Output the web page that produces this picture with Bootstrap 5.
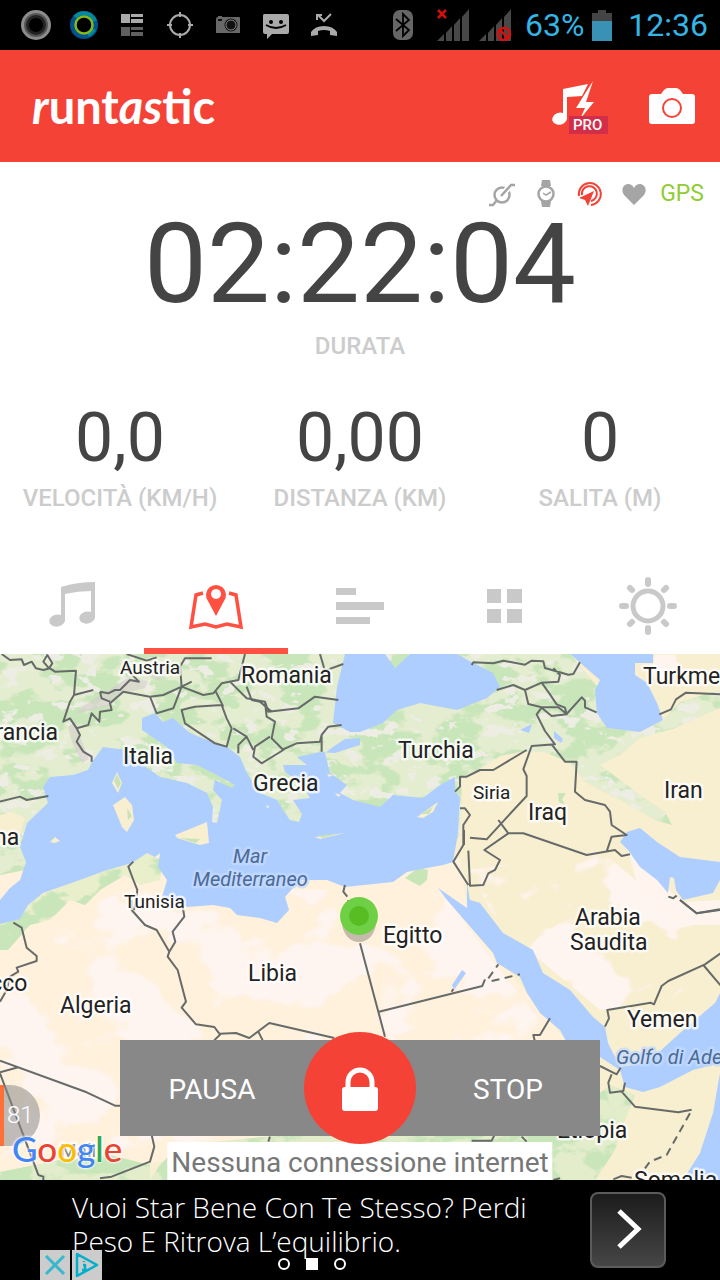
<!DOCTYPE html>
<html lang="it">
<head>
<meta charset="utf-8">
<meta name="viewport" content="width=device-width, initial-scale=1">
<title>Runtastic</title>
<link href="https://cdn.jsdelivr.net/npm/bootstrap@5.3.0/dist/css/bootstrap.min.css" rel="stylesheet">
<style>
body{font-family:Roboto,"Liberation Sans",sans-serif;background:#fff;color:#444}
svg{display:block;flex:none}
button,.btn{--bs-btn-border-radius:0}
.statusbar{height:50px;background:#000;color:#33b5e5;font-size:32px;line-height:50px}
.apphead{height:112px;background:#f44336}
.brandname{font:700 47px/48px Lato,sans-serif;color:#fff;text-decoration:none}
.sensors{height:30px}
.gps{font-size:23px;line-height:32px;color:#92cc33;width:48px;text-align:right}
.clock{font-size:112px;line-height:112px}
.metrics{margin-top:44px}
.metric{font-size:68px;line-height:68px}
.caption{font-size:24px;line-height:28px;font-weight:500;color:#ccc}
.metrics .caption{margin-top:12px}
.tabs .btn{height:94px;color:#c9c9c9;border:0;border-bottom:6px solid transparent;padding:4px 0 0}
.tabs .btn.active{color:#ff5041;border-color:#ff5041;background:none}
.mapbox{min-height:526px;overflow:hidden;background:#aeceff}
filter{color-interpolation-filters:sRGB}
.lbl{font-size:23px;fill:#222;stroke:#fff;stroke-opacity:.75;stroke-width:5px;paint-order:stroke;stroke-linejoin:round}
.sm{font-size:19px}
.faint{fill:#888}
.sea-lbl{font-size:20px;font-style:italic;fill:#4c6a94;stroke:#c4dbff}
.controls{width:66.667%;left:16.667%;bottom:44px;height:96px}
.controls .act{background:#888;color:#fff;font-size:28px;border:0;padding-top:10px}
.controls .pause{padding-right:68px}
.controls .stop{padding-left:68px}
.lock{width:112px;height:112px;background:#f44336;left:50%;top:50%;transform:translate(-50%,-50%);border:0}
.notice{font-size:28px;line-height:34px;color:#777;background:#fff;white-space:nowrap;padding:4px 4px 0}
.speed{left:0;bottom:34px;width:40px;height:61px;background:#8888;border-left:4px solid #ff7038;border-radius:0 31px 31px 0;color:#fff;font-size:24px;line-height:61px;font-weight:300;padding-left:3px}
.google{left:12px;bottom:12px;font:500 35px/40px Lato,sans-serif;text-shadow:0 0 3px #fff,0 0 3px #fff}
.ad{height:100px;background:#000;color:#fff;font:300 28px/34px "Open Sans",sans-serif;padding:10px 54px 0 72px}
.go{width:76px;height:76px;margin-top:2px;border:2px solid #5b5b5b;border-radius:8px;background:linear-gradient(#1c1c1c,#464646)}
.adtools{left:40px;bottom:0;gap:2px}
.adtools button{width:30px;height:30px;background:#ccc;border:0;padding:0}
.pager{bottom:10px;left:278px;gap:16px}
.pager input{appearance:none;width:12px;height:12px;border:2px solid #fff;border-radius:50%;margin:0;background:#000}
.pager input:checked{background:#fff;border-radius:0}
</style>
</head>
<body class="d-flex flex-column min-vh-100">
<div class="statusbar d-flex align-items-center ps-2 pe-2">
  <div class="d-flex ps-1">
    <svg width="48" height="50" viewBox="0 0 48 50"><circle cx="24" cy="25" r="15" fill="#8c8c8c"/><circle cx="24" cy="25" r="12" fill="#555"/><circle cx="24" cy="25" r="10" fill="#222"/><circle cx="24" cy="25" r="7"/></svg>
    <svg width="48" height="50" viewBox="0 0 48 50"><circle cx="24" cy="25" r="11.5" fill="none" stroke="#00538c" stroke-width="5"/><path d="M15 17a12 12 0 0 1 20 4M28 35a11 11 0 0 0 6-6" fill="none" stroke="#008a9c" stroke-width="4"/><circle cx="24" cy="25" r="8.5" fill="none" stroke="#86b71d" stroke-width="2.5"/></svg>
    <svg width="48" height="50" viewBox="0 0 48 50"><path d="M13 14h9v9h-9zM23 14h12v3H23zM23 19h12v4H23z" fill="#aaa"/><path d="M13 27h9v9h-9zM23 27h12v3H23zM23 32h12v4H23z" fill="#606060"/></svg>
    <svg width="48" height="50" viewBox="0 0 48 50"><g fill="none" stroke="#aaa" stroke-width="2"><circle cx="24" cy="25" r="10"/><path d="M24 12v5M24 33v5M11 25h5M32 25h5"/></g></svg>
    <svg width="48" height="50" viewBox="0 0 48 50"><path d="M12 19q0-2 2-2v-1h4v1h17q1 0 1 1v15H12z" fill="#686868"/><path d="M14 20h4" stroke="#111" stroke-width="2"/><circle cx="27" cy="25" r="6.5" fill="#111"/><circle cx="27" cy="25" r="5" fill="#111" stroke="#888"/></svg>
    <svg width="48" height="50" viewBox="0 0 48 50"><path d="M12 14h23q2 0 2 2v16q0 2-2 2H20l-5 5v-5h-2q-2 0-2-2V16q0-2 1-2z" fill="#aaa"/><circle cx="19" cy="22" r="2"/><circle cx="29" cy="22" r="2"/><path d="M14 25q10 6 20 0" fill="none" stroke="#000" stroke-width="2"/></svg>
    <svg width="48" height="50" viewBox="0 0 48 50" fill="none" stroke="#aaa"><path d="M31 14l-7 7-6-6M17 20v-5h5" stroke-width="2"/><path d="M11 36v-4q4-6 13-6t13 6v4l-7-1v-4q-6-2-12 0v4z" fill="#aaa" stroke="none"/></svg>
  </div>
  <div class="d-flex align-items-center ms-auto pe-1">
    <svg width="20" height="30" viewBox="0 0 20 30"><rect width="20" height="30" rx="7" fill="#666"/><path d="M3 9l13 11-6 6V4l6 6L3 21" fill="none" stroke="#000" stroke-width="1.8"/></svg>
    <svg class="ms-4" width="34" height="34" viewBox="0 0 34 34"><path d="M0 33l7-7v7zM9 25l6-7v15H9zM17 17l6-7v23h-6zM25 9l7-8v32h-7z" fill="#484848"/><path d="M1 2l8 8M9 2l-8 8" stroke="#d80f0f" stroke-width="2.5"/></svg>
    <svg class="ms-2" width="34" height="34" viewBox="0 0 34 34"><path d="M0 33l7-7v7zM9 25l6-7v15H9zM17 17l6-7v23h-6zM25 9l7-8v32h-7z" fill="#484848"/><circle cx="25" cy="26" r="6" fill="none" stroke="#d80f0f" stroke-width="2.5"/><path d="M21 22l8 8" stroke="#d80f0f" stroke-width="2.5"/></svg>
    <span class="ps-1 ms-2">63%</span>
    <svg class="ms-2" width="20" height="32" viewBox="0 0 20 32"><path d="M0 4h6V1h8v3h6v8H0z" fill="#444"/><path d="M0 12h20v20H0z" fill="#3a91b6"/></svg>
    <span class="ms-3">12:36</span>
  </div>
</div>

<header class="apphead d-flex align-items-center px-4">
  <a href="#" class="brandname ps-2" aria-label="runtastic"><i>r</i>unt<i>as</i>tic</a>
  <button class="btn p-0 border-0 ms-auto" aria-label="Musica PRO"><svg width="56" height="60" viewBox="0 -4 56 60"><path d="M11 9L36 4l-6 12-15 1v22a7.500 6 -15 1 1-4-6z" fill="#fff"/><path d="M41 1L24 28h9l-5 11 14-17h-8z" fill="#fff"/><rect x="17" y="36" width="39" height="18" fill="#d22d49"/><text x="21" y="50" font-size="15" font-weight="500" fill="#fff">PRO</text></svg></button>
  <button class="btn p-0 border-0 ms-4 ps-3" aria-label="Fotocamera"><svg width="48" height="38" viewBox="0 0 48 38"><path d="M4 7h9l3-4q2-2 4-2h8q2 0 4 2l3 4h9q3 0 3 3v24q0 3-3 3H4q-3 0-3-3V10q0-3 3-3z" fill="#fff"/><circle cx="24" cy="21" r="9" fill="none" stroke="#f44336" stroke-width="2"/></svg></button>
</header>

<main class="d-flex flex-column flex-grow-1">
<section class="text-center pt-3 pb-5">
  <div class="sensors d-flex justify-content-end pe-3">
    <svg width="44" height="30" viewBox="0 0 44 30" fill="none" stroke="#a5a5a5" stroke-width="2.5"><circle cx="22" cy="17" r="7.500"/><path d="M9 27h4l4-5"/><path d="M22 17L31 7h4" stroke="#fff" stroke-width="6"/><path d="M21 18L31 7h4"/></svg>
    <svg width="44" height="30" viewBox="0 0 44 30"><path d="M18 2h8l1 6H17zM17 23h10l-1 6h-8z" fill="#a5a5a5"/><circle cx="22" cy="16" r="7.500" fill="#fff" stroke="#a5a5a5" stroke-width="2.500"/><path d="M19 15l3 2 5-3" fill="none" stroke="#a5a5a5" stroke-width="1.500"/></svg>
    <svg width="44" height="30" viewBox="0 0 44 30"><g fill="none" stroke="#f44336" stroke-width="2"><path d="M11 18a11 11 0 1 1 12 9"/><path d="M14 17a7.500 7.500 0 1 1 9 6"/></g><path d="M26 13L11 20l6 2 3 6z" fill="#f44336"/></svg>
    <svg width="44" height="30" viewBox="0 0 44 30"><path d="M22 27l-10-10C8 11 12 6 16 6q4 0 6 4 2-4 6-4c4 0 8 5 4 11z" fill="#a5a5a5"/></svg>
    <span class="gps">GPS</span>
  </div>
  <div class="clock">02:22:04</div>
  <div class="caption mt-2 pt-1">DURATA</div>
  <div class="metrics row g-0">
    <div class="col-4"><div class="metric">0,0</div><div class="caption">VELOCITÀ (KM/H)</div></div>
    <div class="col-4"><div class="metric">0,00</div><div class="caption">DISTANZA (KM)</div></div>
    <div class="col-4"><div class="metric">0</div><div class="caption">SALITA (M)</div></div>
  </div>
</section>

<nav class="tabs d-flex">
  <button class="btn flex-fill w-100" aria-label="Musica"><svg class="mx-auto" width="60" height="60" viewBox="0 0 60 60" fill="currentColor"><path d="M19 11q16-5 34-5v36a8 6 -10 1 1-4-6V15q-13 0-26 3v27a8 6 -10 1 1-4-6z"/></svg></button>
  <button class="btn active flex-fill w-100" aria-label="Mappa"><svg class="mx-auto" width="60" height="60" viewBox="0 0 60 60"><path d="M17 17l-7 2-5 32 14-3 11 3 11-3 14 3-5-32-7-2" fill="none" stroke="currentColor" stroke-width="3.500"/><path fill-rule="evenodd" d="M30 40l-8-15a10 10 0 1 1 16 0zM30 13a5 5 0 1 0 .1 0z" fill="currentColor"/></svg></button>
  <button class="btn flex-fill w-100" aria-label="Statistiche"><svg class="mx-auto" width="48" height="60" viewBox="0 0 48 60" fill="currentColor"><path d="M0 12h20v7H0zM0 26h48v8H0zM0 41h34v7H0z"/></svg></button>
  <button class="btn flex-fill w-100" aria-label="Riquadri"><svg class="mx-auto" width="60" height="60" viewBox="0 0 60 60" fill="currentColor"><path d="M13 13h14v14H13zM33 13h15v14H33zM13 33h14v14H13zM33 33h15v14H33z"/></svg></button>
  <button class="btn flex-fill w-100" aria-label="Meteo"><svg class="mx-auto" width="60" height="60" viewBox="0 0 60 60" fill="none" stroke="currentColor" stroke-linecap="round"><circle cx="30" cy="30" r="15" stroke-width="5"/><path d="M30 4v4M30 52v4M4 30h4M52 30h4M12 12l2 2M46 46l2 2M48 12l-2 2M14 46l-2 2" stroke-width="6"/></svg></button>
</nav>

<section class="mapbox position-relative flex-grow-1">
<svg class="position-absolute top-0 start-0 w-100 h-100" viewBox="0 654 720 526" preserveAspectRatio="xMidYMid slice" role="img" aria-label="Mappa">
  <defs>
    <filter id="woods" x="0" y="0" width="100%" height="100%"><feTurbulence type="fractalNoise" baseFrequency=".025 .04" numOctaves="4" seed="8"/><feColorMatrix values="0 0 0 0 .79  0 0 0 0 .90  0 0 0 0 .73  14 0 0 0 -6.7"/><feComposite operator="in" in2="SourceAlpha"/></filter>
    <filter id="ridges" x="0" y="0" width="100%" height="100%"><feTurbulence type="fractalNoise" baseFrequency=".05 .08" numOctaves="4" seed="21"/><feColorMatrix values="0 0 0 0 .93  0 0 0 0 .93  0 0 0 0 .89  0 16 0 0 -9.600"/><feComposite operator="in" in2="SourceAlpha"/></filter>
    <filter id="sand" x="0" y="0" width="100%" height="100%"><feTurbulence type="fractalNoise" baseFrequency=".012 .016" numOctaves="4" seed="5"/><feColorMatrix values="0 0 0 0 1  0 0 0 0 .96  0 0 0 0 .94  16 0 0 0 -8"/><feComposite operator="in" in2="SourceAlpha"/></filter>
    <path id="north" d="M0 654H570L600 690 597 713 607 728 640 732 663 720 680 702 720 690V708L675 728 640 738 620 755 600 765 640 795 665 812 672 825 655 820 620 800 585 782 570 763 545 752 520 752 500 756 478 770 462 778 460 835 440 860 300 830 150 845 0 875z"/>
    <path id="maghreb" d="M0 915L28 900 60 887 107 870 147 853 162 860 160 880 140 885 125 875 100 890 85 905 70 900 50 920 30 925 8 950 0 950z"/>
    <path id="horn" d="M180 1145L360 1128 560 1125 610 1085 635 1095 625 1120 615 1150 595 1180H150L160 1165zM0 1172L70 1158 110 1155 150 1165 150 1180H0z"/>
  </defs>
  <path fill="#f8eed0" d="M0 654h720v526H0z"/>
  <path fill="#fff1dc" d="M0 850L345 860 460 858 467 908 500 960 540 1010 570 1045 600 1060 560 1125 350 1140 0 1180z"/>
  <path filter="url(#sand)" d="M0 935L130 890 300 890 440 890 500 970 560 1045 380 1125 0 1160z"/>
  <path filter="url(#sand)" d="M470 870L600 850 665 905 720 905V960L670 1000 600 1010 540 960 490 910z"/>
  <use href="#north" fill="#e4edcf"/><use href="#north" filter="url(#woods)"/><use href="#north" filter="url(#ridges)"/>
  <use href="#maghreb" fill="#e9eecb"/><use href="#maghreb" filter="url(#woods)"/>
  <use href="#horn" fill="#e3edcc"/><use href="#horn" filter="url(#woods)"/>
  <path fill="#f8eed0" d="M0 815L12 812 25 818 18 840 0 835zM502 757L530 752 560 765 575 795 605 815 620 835 560 845 465 825 468 785z"/>
  <path fill="#fff5ee" d="M628 850L660 882 683 902 720 900V925L680 925 640 895zM655 655h20l3 10-12 15-15-6z"/>
  <path fill="#c7e5b6" d="M405 878l13-10 10 2-1 10-7 6zM558 793h8l-4 6 3 6-6-3z"/>
  <g fill="#d4cfcb" opacity=".65"><path d="M68 727l8-6 5 18 8 20-7 4-9-18zM75 714l35-8 10-12 25-6 3-7-20-3-20 12-25 16zM145 675l15-10 8 4-8 12z"/></g>
  <g fill="#aeceff">
    <path d="M92 762L88 770 73 775 50 777 43 787 48 803 27 823 20 847 26 862 20 880 10 888 0 900V924L20 919 28 905 43 893 60 887 80 880 107 870 132 863 147 853 155 857 160 853 158 867 167 880 162 897 187 907 213 905 230 908 237 915 260 918 277 923 289 910 285 897 300 880 327 880 345 887 393 882 407 872 427 868 443 865 453 862 458 833 460 797 455 792 455 777 440 785 423 798 393 795 380 807 353 800 340 793 347 785 330 773 325 753 333 747 345 739 360 738 360 745 335 753 320 752 297 757 307 765 283 765 285 772 302 784 310 798 293 800 302 814 299 822 290 820 283 810 277 800 260 793 247 773 240 757 227 747 207 740 190 733 173 718 163 722 155 713 142 718 142 730 167 747 177 763 197 765 213 773 235 785 232 788 215 780 213 790 222 800 217 823 212 822 213 807 207 793 187 783 160 777 140 763 127 750 103 747z"/>
    <path d="M345 654L337 687 333 723 350 732 360 732 383 723 397 710 420 703 457 710 487 698 500 687 493 673 473 663 457 654 410 654 395 668 385 654z"/>
    <path d="M570 654L600 680 595 690 597 713 607 728 640 732 663 720 657 703 647 683 635 675 635 663 653 663 653 654z"/>
    <path d="M620 842L627 832 640 828 657 842 680 857 720 862V880L713 893 683 900 676 890 674 878 670 877 668 893 657 880 640 867 628 850z"/>
    <path d="M438 888L467 908 467 883 470 900 480 903 503 933 533 950 543 973 570 990 593 1017 605 1027 608 1043 620 1067 647 1063 680 1033 715 1003 720 993V1063L693 1070 660 1087 643 1092 625 1087 620 1070 600 1057 567 1043 560 1030 540 1013 527 993 520 977 497 963 493 953 467 923 447 900z"/>
    <path d="M720 1073L713 1113 700 1153 683 1180H720z"/>
    <path d="M520 730l12-6-3 9zM554 731l9 8-2 4-7-5zM452 985l10-15 4 3-12 17z"/>
  </g>
  <g fill="#f8eed0"><path d="M117 772l5 11-4 10-6-10zM125 797l7 8 2 15-7 12-5-5-9-22zM175 835l32-13 2 21-9 2-23-7zM50 842l5-5 5 4-5 2zM417 817l21-15-5 10-10 6zM315 837l30-4-25 6zM327 774l6 1-4 2zM335 793l6 2-3 2zM266 805l4 2-3 1z"/></g>
  <g fill="#c9e3b6"><path d="M117 774l4 9-3 6-4-8zM127 808l5 8-4 4zM180 838l20 1-4 4zM318 836l20-2-15 4zM421 814l12-7-4 7z"/></g>
  <g fill="none" stroke="#666b69" stroke-width="6" stroke-linejoin="round">
    <g transform="translate(0 650) scale(.3333)">
      <path d="M5 12L30 30 65 28 72 45 95 35 108 55 130 60 150 55 165 65 228 62 222 135 280 120M130 35l12-20 15 25-10 15zM222 135L210 155 190 215 210 205 230 235 265 225 275 190 298 215 300 185 335 180 330 160 370 125 450 140 490 135 545 110 610 135 640 130 665 100 715 90 735 12M300 125l25 5 20-10 15 0 30-30 27 5-30-30-5-20M300 125l5 20 25 10M450 140l20 50 50-15 25-65-5-60 15-25 80 0M380 12l60 20 30-10M545 110l30-15M645 120l25 50M740 110l15 40 25 5 35 30M690 95l50 50 55 10 10 30 90-10 50-35 70 10M585 170l80-5 15 40 15 30-15 55-35-10-90-60-10-40 20-5zM795 155l5 45 25 15-10 50 35 35-65 40-25-20 5-30 45-30M700 235l40 25 20 40M740 260l-25 25 0 25M845 300l45-20 70-5 5-20 20-25 40-5M965 255l0 50M960 12l15 50 55-20M0 455l60-15 20 10 65-12M230 235l10 20-10 20 20 30 25 15 0 15M400 635l-15 15 15 40 12 30-5 40-5 20M1035 705l-5 20 12 15"/>
    </g>
    <g transform="translate(360 650) scale(.3333)">
      <path d="M335 45l5-8 60 3 30-8 65 12 20-12 35 2 5 20 70 20 15-2 20-35M410 120l50-15 35 15 50-22 50-3 5-20-20-20M495 120l10 42 40 10 50 0 25 20 45-50 10 10 0 20 35 15M545 98l25 35 20 30 25 10 5 20-45 5-30-25-15 20 25 50 30 40-70 5-25 70 10 20 0 60-65 70-55 60-50-5M500 300l-100 60-40 0-40 20-20 0 0 30-15 15M575 283l40 52 35 0-5 90 30 25 60 15 15 20 5 40 45 30-45 5-15 45M415 510l30 40 45 0 190 65 85-15 20 18 25-5M445 550l-72 50 47 30-15 30-20 10-15 35-40 2-5-105M312 540l0 45M325 705l-45-70 30-50 0-60 20-30-15-20-15 0M898 193l35-15 15-30 30-20 105 5M960 750l50 40 70-12M925 740l15 5 10-8"/>
    </g>
    <g transform="translate(0 900) scale(.3333)">
      <path d="M40 68l25 15 15 60 30 25 0 15-60 20 5 12-25 15-10 40-20 35M395 0l0 30 40 45 35 15 38 65-5 15 30 40 25 95-13 18 43 50 55 8 15 20 50-2 40 15 60-45 195 45M545 0l8 50-35 45 8 30-18 30M662 402l-20 20M775 395l15 30M0 482l260 95 85 40 15 0M0 517l55-15M0 520l115 305 15 5 0 10M455 705l8 35-13 45-115 45-35 5M810 710l-5 15M1045 0l5 60"/>
    </g>
    <g transform="translate(360 900) scale(.3333)">
      <path d="M0 130l75 280M57 335l310-77 8-20M735 380l12-25-5-25 130-22 10 5 23-55 20-15 110-50 50-35M1030 195l55 65M960 0l50 40 70-10M570 355l-30 50-20 0 5 20M720 498l50 25 12-20M755 523l-10 25 5 30 40-5 5-25M785 575l40 45 130 17 40-8M335 722l60 0 10-20M485 710l15 15M760 838l25-10 30 5M580 840l20-5M275 275l5-8"/>
      <path stroke-dasharray="24 16" d="M385 235l30-42M395 243l85-20M990 640l-70 125-50 20-15 20"/>
    </g>
  </g>
  <g class="lbl">
    <text class="sm faint" x="60" y="1157">Mali</text>
    <text class="sm" x="120" y="674">Austria</text><text x="241" y="683">Romania</text><text x="643" y="684">Turkmenistan</text>
    <text x="-17" y="740">Francia</text><text x="123" y="764">Italia</text><text x="253" y="791">Grecia</text><text x="398" y="758">Turchia</text>
    <text class="sm" x="473" y="799">Siria</text><text x="528" y="820">Iraq</text><text x="664" y="798">Iran</text><text x="-58" y="845">Spagna</text>
    <text class="sm" x="124" y="908">Tunisia</text><text x="383" y="943">Egitto</text><text x="248" y="981">Libia</text><text x="60" y="1013">Algeria</text>
    <text x="-63" y="991">Marocco</text><text x="575" y="925">Arabia</text><text x="570" y="950">Saudita</text><text x="627" y="1027">Yemen</text>
    <text x="557" y="1138">Etiopia</text><text x="634" y="1188">Somalia</text>
    <g class="sea-lbl"><text x="233" y="863">Mar</text><text x="193" y="886">Mediterraneo</text><text x="616" y="1064">Golfo di Aden</text></g>
  </g>
  <ellipse cx="359" cy="922" rx="17" ry="20" fill="#555" opacity=".35"/>
  <circle cx="359" cy="916" r="19" fill="#70d045"/><circle cx="359" cy="916" r="10" fill="#58bd23"/>
</svg>
<div class="speed position-absolute">81</div>
<div class="google position-absolute" aria-label="Google"><span style="color:#4285f4">G</span><span style="color:#ea4335">o</span><span style="color:#fbbc05">o</span><span style="color:#4285f4">g</span><span style="color:#34a853">l</span><span style="color:#ea4335">e</span></div>
<div class="notice position-absolute bottom-0 start-50 translate-middle-x">Nessuna connessione internet</div>
<div class="controls position-absolute d-flex">
  <button class="btn act pause w-50">PAUSA</button>
  <button class="btn act stop w-50">STOP</button>
  <button class="btn lock position-absolute rounded-circle p-0" aria-label="Blocca"><svg class="mx-auto mt-1" width="40" height="48" viewBox="0 0 40 48"><path d="M8 23v-7a12 12 0 0 1 24 0v7" fill="none" stroke="#fff" stroke-width="5"/><rect x="2" y="21" width="36" height="24" rx="3" fill="#fff"/></svg></button>
</div>
</section>
</main>

<footer class="ad position-relative d-flex justify-content-between">
  <div class="adtext">Vuoi Star Bene Con Te Stesso? Perdi<br>Peso E Ritrova L’equilibrio.</div>
  <button class="go p-0" aria-label="Apri"><svg class="mx-auto" width="40" height="44" viewBox="0 0 40 44"><path d="M11 3l19 18-19 18" fill="none" stroke="#fff" stroke-width="5"/></svg></button>
  <div class="adtools position-absolute d-flex">
    <button aria-label="Chiudi"><svg width="30" height="30" viewBox="0 0 30 30"><path d="M6 6l18 18M24 6L6 24" stroke="#38b8cd" stroke-width="3"/></svg></button>
    <button aria-label="Informazioni"><svg width="30" height="30" viewBox="0 0 30 30"><path d="M5 4v22l20-11zM12 11v1M11 15h2v5M10 20h5" fill="none" stroke="#00aecd" stroke-width="2.500" stroke-linejoin="round"/></svg></button>
  </div>
  <div class="pager position-absolute d-flex">
    <input type="radio" name="page" aria-label="Pagina 1"><input type="radio" name="page" aria-label="Pagina 2" checked><input type="radio" name="page" aria-label="Pagina 3">
  </div>
</footer>
<script src="https://cdn.jsdelivr.net/npm/bootstrap@5.3.0/dist/js/bootstrap.bundle.min.js"></script>
</body>
</html>
